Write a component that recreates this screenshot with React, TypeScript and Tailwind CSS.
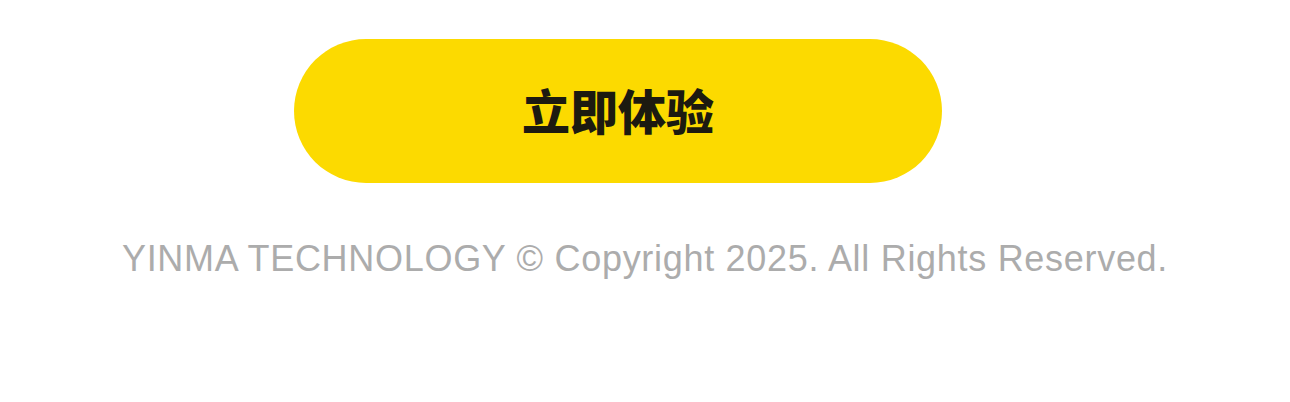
export default function App() {
  return (
    <div className="w-[1290px] h-[402px] bg-white flex flex-col" style={{ fontFamily: '"Liberation Sans", "Noto Sans CJK SC", sans-serif' }}>
      <div className="pt-[39px] pl-[294px]">
        <button className="w-[648px] h-[144px] rounded-full bg-[#fcda00] flex items-center justify-center">
          <span className="text-[48px] leading-none font-black text-[#1c1a10] -mt-[4px]" style={{ fontFamily: '"Noto Sans CJK SC", sans-serif' }}>
            立即体验
          </span>
        </button>
      </div>
      <p className="mt-[54px] text-center text-[36px] leading-[44px] tracking-[0.7px] text-[#acacac]">
        YINMA TECHNOLOGY © Copyright 2025. All Rights Reserved.
      </p>
    </div>
  );
}
